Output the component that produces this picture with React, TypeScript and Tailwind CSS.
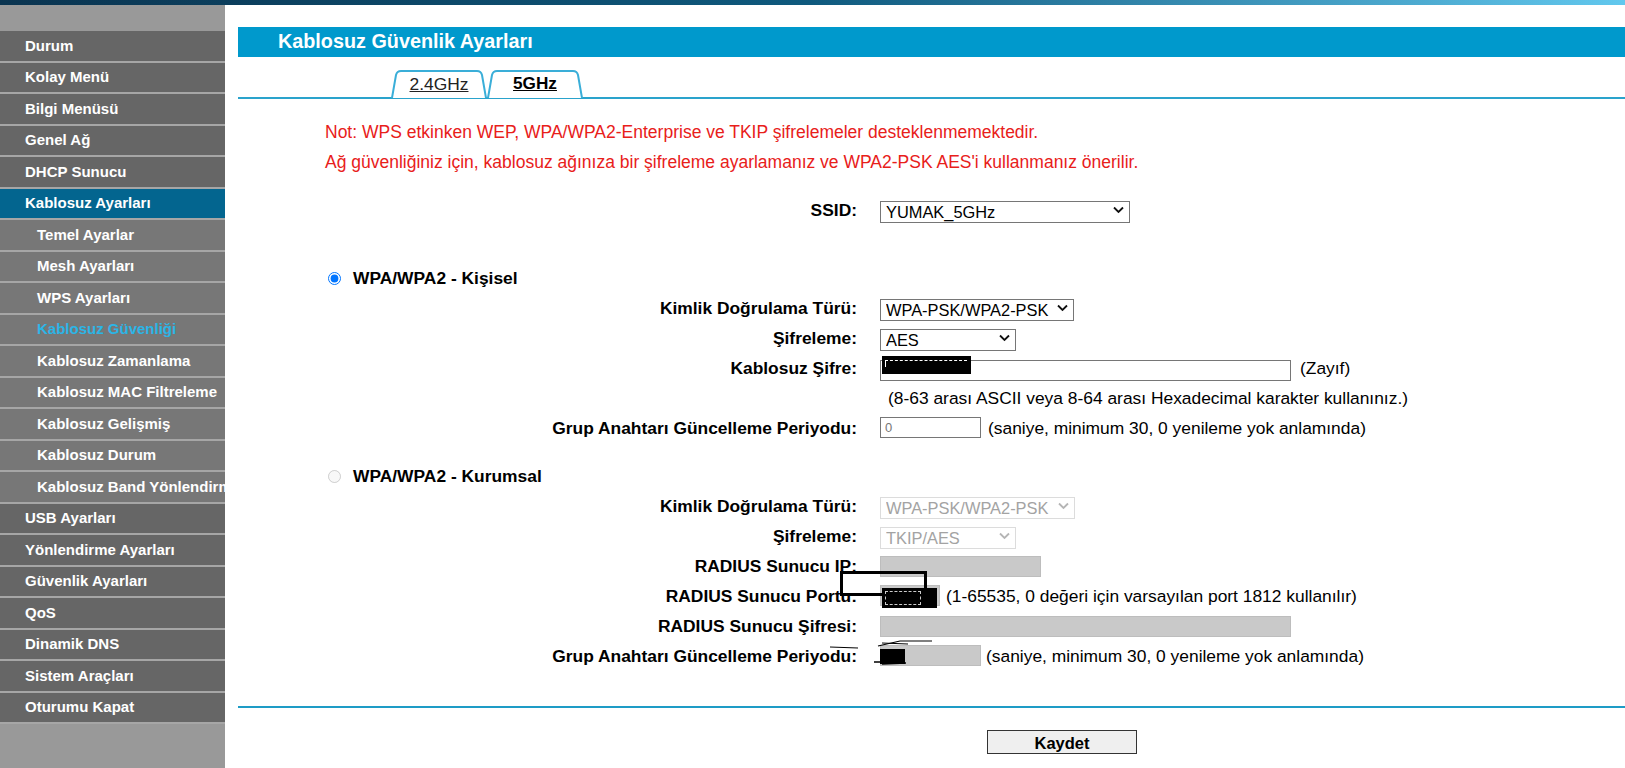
import type { ReactNode } from 'react'

type MenuItem = {
  label: string
  sub?: boolean
  open?: boolean
  current?: boolean
}

const menu: MenuItem[] = [
  { label: 'Durum' },
  { label: 'Kolay Menü' },
  { label: 'Bilgi Menüsü' },
  { label: 'Genel Ağ' },
  { label: 'DHCP Sunucu' },
  { label: 'Kablosuz Ayarları', open: true },
  { label: 'Temel Ayarlar', sub: true },
  { label: 'Mesh Ayarları', sub: true },
  { label: 'WPS Ayarları', sub: true },
  { label: 'Kablosuz Güvenliği', sub: true, current: true },
  { label: 'Kablosuz Zamanlama', sub: true },
  { label: 'Kablosuz MAC Filtreleme', sub: true },
  { label: 'Kablosuz Gelişmiş', sub: true },
  { label: 'Kablosuz Durum', sub: true },
  { label: 'Kablosuz Band Yönlendirme', sub: true },
  { label: 'USB Ayarları' },
  { label: 'Yönlendirme Ayarları' },
  { label: 'Güvenlik Ayarları' },
  { label: 'QoS' },
  { label: 'Dinamik DNS' },
  { label: 'Sistem Araçları' },
  { label: 'Oturumu Kapat' },
]

function Sidebar() {
  return (
    <aside className="w-[225px] shrink-0 bg-[#999999] pt-[26px]">
      {menu.map((m) => {
        let cls =
          'flex h-[31.5px] items-center overflow-hidden whitespace-nowrap border-b-2 border-[#a6a6a6] text-[15px] font-bold'
        if (m.open) cls += ' bg-[#03658f] pl-[25px] text-white'
        else if (m.sub) cls += ' bg-[#777777] pl-[37px]'
        else cls += ' bg-[#666666] pl-[25px] text-white'
        if (m.sub) cls += m.current ? ' text-[#2bb5e6]' : ' text-white'
        return (
          <div key={m.label} className={cls}>
            {m.label}
          </div>
        )
      })}
    </aside>
  )
}

function Tab({ label, active }: { label: string; active?: boolean }) {
  return (
    <div className="relative flex h-[28px] w-[96px] items-center justify-center">
      <svg className="absolute inset-0" width="96" height="28" viewBox="0 0 96 28">
        <path
          d="M1 28 L5 5 Q6 1 10 1 L86 1 Q90 1 91 5 L95 28"
          fill="white"
          stroke="#3aaed8"
          strokeWidth="2"
        />
      </svg>
      <span
        className={
          active
            ? 'relative text-[17.2px] font-bold text-black underline'
            : 'relative text-[17.4px] text-[#222] underline'
        }
      >
        {label}
      </span>
    </div>
  )
}

function Chevron({ color }: { color: string }) {
  return (
    <svg
      className="pointer-events-none absolute right-[6px] top-1/2 -translate-y-1/2"
      width="11"
      height="7"
      viewBox="0 0 11 7"
    >
      <path d="M1 1 L5.5 5.5 L10 1" fill="none" stroke={color} strokeWidth="1.8" />
    </svg>
  )
}

function Select({ value, className, disabled }: { value: string; className: string; disabled?: boolean }) {
  return (
    <div className={'relative h-[22px] ' + className}>
      <select
        disabled={disabled}
        defaultValue={value}
        className={
          disabled
            ? 'h-full w-full appearance-none border border-[#dcdcdc] bg-white py-0 pl-[5px] text-[16.4px] leading-[20px] text-[#a3a3a3]'
            : 'h-full w-full appearance-none border border-[#767676] bg-white py-0 pl-[5px] text-[16.4px] leading-[20px] text-black'
        }
      >
        <option>{value}</option>
      </select>
      <Chevron color={disabled ? '#b5b5b5' : '#111'} />
    </div>
  )
}

function Row({ label, children }: { label: string; children?: ReactNode }) {
  return (
    <div className="flex h-[30px] items-center">
      <div className="w-[619px] shrink-0 text-right font-bold">{label}</div>
      <div className="ml-[23px] flex items-center">{children}</div>
    </div>
  )
}

function Radio({ label, checked, disabled }: { label: string; checked?: boolean; disabled?: boolean }) {
  return (
    <div className="flex h-[30px] items-center pl-[90px]">
      <input
        type="radio"
        name="mode"
        defaultChecked={checked}
        disabled={disabled}
        className="m-0 h-[13px] w-[13px] accent-[#0075ff]"
      />
      <span className="ml-[12px] font-bold">{label}</span>
    </div>
  )
}

const grayInput = 'h-[21px] border border-[#bdbdbd] bg-[#c9c9c9]'

export default function App() {
  return (
    <div className="flex h-[768px] w-[1625px] flex-col overflow-hidden bg-white font-['Liberation_Sans',Arial,sans-serif] text-black">
      <div className="h-[5px] bg-linear-to-r from-[#0a3450] via-[#0f5a7e] to-[#62c8ee]" />
      <div className="flex flex-1">
        <Sidebar />

        <main className="flex-1 pl-[13px] pt-[22px] text-[17.4px]">
          <div className="flex h-[30px] items-center bg-[#0099cc] pl-[40px] text-[19.8px] font-bold text-white">
            Kablosuz Güvenlik Ayarları
          </div>

          <div className="mt-[13px] flex pl-[153px]">
            <Tab label="2.4GHz" />
            <Tab label="5GHz" active />
          </div>
          <div className="-mt-[1px] h-[2px] bg-[#2aa3cc]" />

          <div className="mt-[18px] pl-[87px] text-[17.5px] text-[#e8201a]">
            <div className="flex h-[30px] items-center">
              Not: WPS etkinken WEP, WPA/WPA2-Enterprise ve TKIP şifrelemeler desteklenmemektedir.
            </div>
            <div className="flex h-[30px] items-center">
              Ağ güvenliğiniz için, kablosuz ağınıza bir şifreleme ayarlamanız ve WPA2-PSK AES'i kullanmanız önerilir.
            </div>
          </div>

          <div className="mt-[18px]">
            <Row label="SSID:">
              <Select value="YUMAK_5GHz" className="w-[250px]" />
            </Row>
          </div>

          <div className="mt-[38px]">
            <Radio label="WPA/WPA2 - Kişisel" checked />
            <Row label="Kimlik Doğrulama Türü:">
              <Select value="WPA-PSK/WPA2-PSK" className="w-[194px]" />
            </Row>
            <Row label="Şifreleme:">
              <Select value="AES" className="w-[136px]" />
            </Row>
            <Row label="Kablosuz Şifre:">
              <div className="relative h-[21px] w-[411px]">
                <input type="text" readOnly className="h-full w-full border border-[#767676] bg-white" />
                <div className="absolute left-[2px] top-[-1px] h-[18px] w-[89px] bg-black">
                  <div className="ml-[3px] mt-[4px] w-[82px] border-t border-dashed border-white" />
                  <div className="ml-[3px] h-[6px] w-px bg-white" />
                </div>
              </div>
              <span className="ml-[9px]">(Zayıf)</span>
            </Row>
            <Row label="">
              <span className="pl-[8px]">(8-63 arası ASCII veya 8-64 arası Hexadecimal karakter kullanınız.)</span>
            </Row>
            <Row label="Grup Anahtarı Güncelleme Periyodu:">
              <input
                type="text"
                readOnly
                defaultValue="0"
                className="h-[21px] w-[101px] border border-[#767676] bg-white pl-[4px] text-[13px] text-[#777]"
              />
              <span className="ml-[7px]">(saniye, minimum 30, 0 yenileme yok anlamında)</span>
            </Row>
          </div>

          <div className="mt-[18px]">
            <Radio label="WPA/WPA2 - Kurumsal" disabled />
            <Row label="Kimlik Doğrulama Türü:">
              <Select value="WPA-PSK/WPA2-PSK" className="w-[195px]" disabled />
            </Row>
            <Row label="Şifreleme:">
              <Select value="TKIP/AES" className="w-[136px]" disabled />
            </Row>
            <Row label="RADIUS Sunucu IP:">
              <div className={grayInput + ' w-[161px]'} />
            </Row>
            <Row label="RADIUS Sunucu Portu:">
              <div className="relative">
                <div className={grayInput + ' w-[60px]'} />
                <div className="absolute left-[-40px] top-[-14px] h-[25px] w-[87px] border-[3px] border-black" />
                <div className="absolute left-[2px] top-[3px] h-[20px] w-[55px] bg-black p-[3px]">
                  <div className="h-full w-[36px] border border-dashed border-white/80" />
                </div>
              </div>
              <span className="ml-[6px]">(1-65535, 0 değeri için varsayılan port 1812 kullanılır)</span>
            </Row>
            <Row label="RADIUS Sunucu Şifresi:">
              <div className={grayInput + ' w-[411px]'} />
            </Row>
            <Row label="Grup Anahtarı Güncelleme Periyodu:">
              <div className="relative">
                <div className={grayInput + ' w-[101px]'} />
                <div className="absolute left-0 top-[4px] h-[15px] w-[25px] bg-black" />
                <svg
                  className="absolute left-[-50px] top-[-5px]"
                  width="130"
                  height="26"
                  viewBox="0 0 130 26"
                >
                  <path d="M0 7 L28 8" stroke="black" strokeWidth="1" fill="none" />
                  <path d="M48 6 L70 1 L102 1" stroke="black" strokeWidth="1.2" fill="none" />
                  <path d="M52 3 L78 4" stroke="black" strokeWidth="1" fill="none" />
                  <path d="M44 22 L60 22 L52 24 L76 23" stroke="black" strokeWidth="1.4" fill="none" />
                </svg>
              </div>
              <span className="ml-[5px]">(saniye, minimum 30, 0 yenileme yok anlamında)</span>
            </Row>
          </div>

          <div className="mt-[35px] h-[2px] bg-[#1e9cc6]" />
          <div className="mt-[22px] pl-[749px]">
            <button
              type="button"
              className="h-[24px] w-[150px] border border-[#333] bg-[#efefef] text-[16.5px] font-bold"
            >
              Kaydet
            </button>
          </div>
        </main>
      </div>
    </div>
  )
}
